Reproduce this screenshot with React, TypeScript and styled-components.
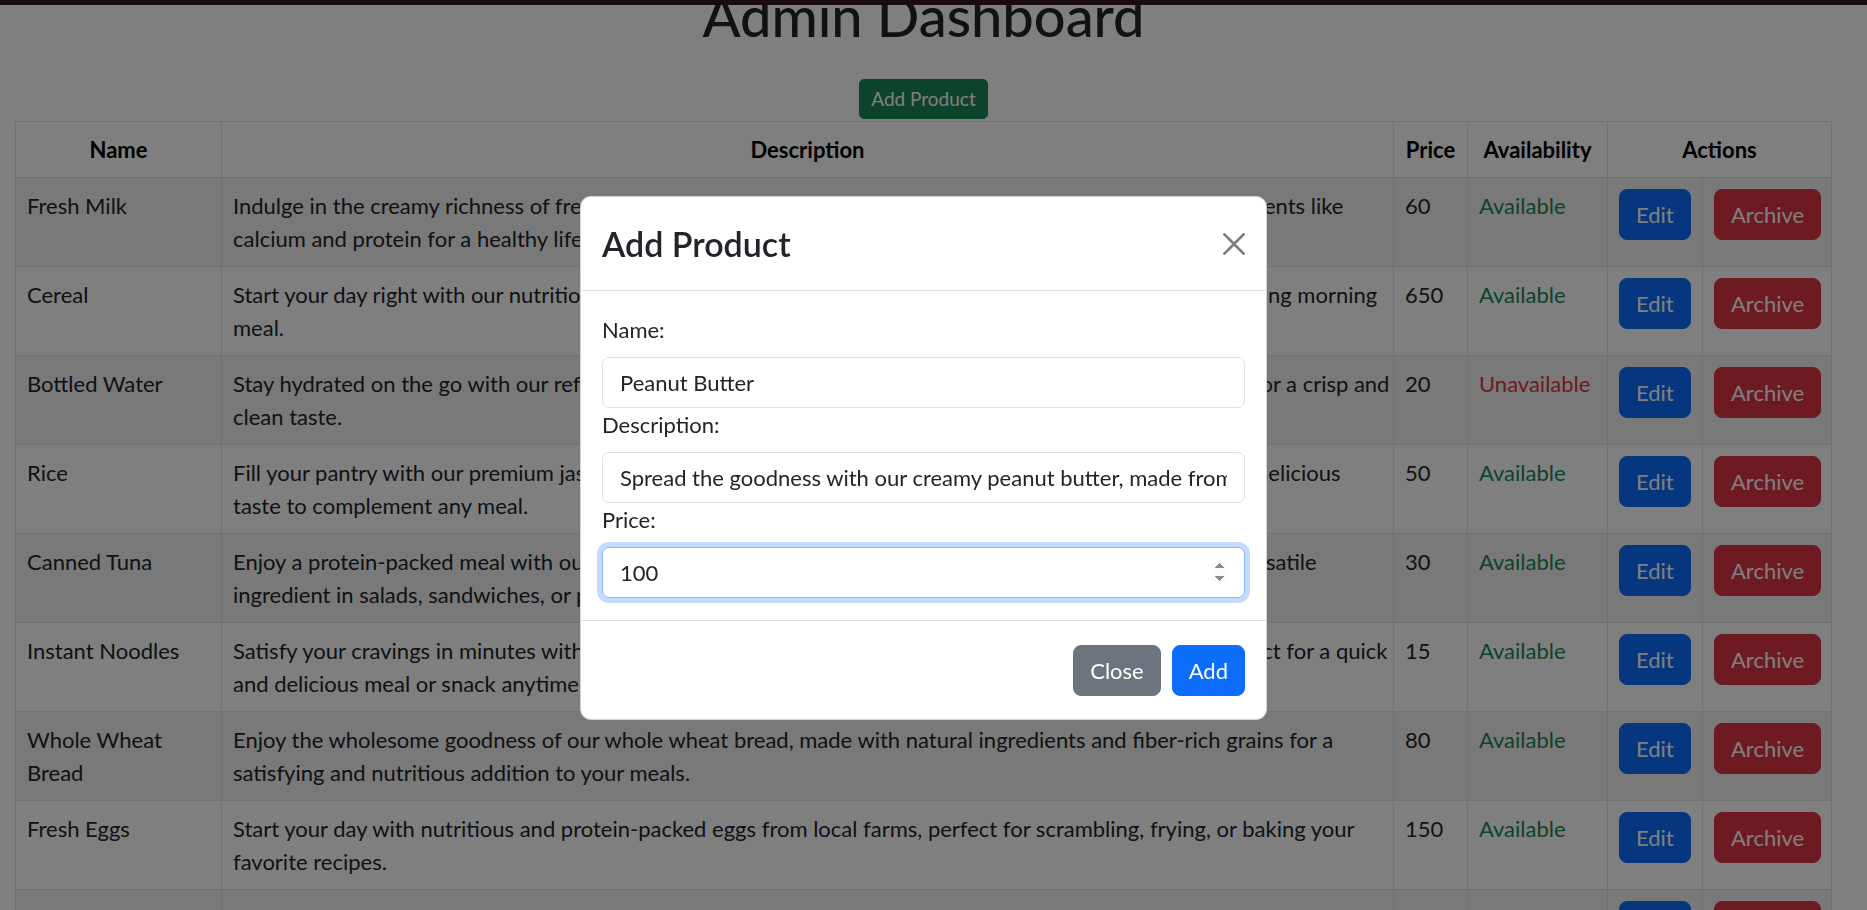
import React from 'react';
import styled, { createGlobalStyle, css } from 'styled-components';

const GlobalStyle = createGlobalStyle`
    html, body {
        margin: 0;
        padding: 0;
        background: #fff;
        overflow: hidden;
    }
    body {
        font-family: Lato, "Liberation Sans", sans-serif;
        font-size: 22px;
        line-height: 33px;
        color: #212529;
    }
    * {
        box-sizing: border-box;
    }
`;

const colors = {
    primary: '#0d6efd',
    danger: '#dc3545',
    success: '#198754',
    secondary: '#6c757d',
};

type Variant = keyof typeof colors;

const TopBar = styled.div`
    position: fixed;
    top: 0;
    left: 0;
    right: 0;
    height: 5px;
    background: #381424;
    z-index: 5;
`;

const Page = styled.main`
    padding: 0 35px 0 15px;
`;

const Title = styled.h1`
    margin: -17px 0 30px;
    font-size: 56px;
    line-height: 66px;
    font-weight: 500;
    text-align: center;
`;

const Toolbar = styled.div`
    display: flex;
    justify-content: center;
    margin-bottom: 2px;
`;

const Button = styled.button<{ $variant: Variant; $small?: boolean }>`
    font-family: inherit;
    color: #fff;
    background: ${({ $variant }) => colors[$variant]};
    border: 1px solid ${({ $variant }) => colors[$variant]};
    border-radius: 8px;
    padding: 8px 16px;
    font-size: 22px;
    line-height: 33px;
    cursor: pointer;
    white-space: nowrap;

    ${({ $small }) => $small && css`
        font-size: 19px;
        line-height: 28px;
        padding: 5px 11px;
        border-radius: 5px;
    `}
`;

const Table = styled.table`
    width: 100%;
    table-layout: fixed;
    border-collapse: collapse;
`;

const Th = styled.th`
    border: 1px solid #dee2e6;
    padding: 11px;
    font-weight: 700;
    text-align: center;
    color: #000;
`;

const Row = styled.tr<{ $striped: boolean }>`
    background: ${({ $striped }) => ($striped ? '#f2f2f2' : '#fff')};
`;

const Td = styled.td`
    border: 1px solid #dee2e6;
    padding: 11px;
    height: 89px;
    vertical-align: top;
`;

const Line = styled.span`
    display: block;
    white-space: nowrap;
`;

const Status = styled.span<{ $ok: boolean }>`
    color: ${({ $ok }) => ($ok ? colors.success : colors.danger)};
`;

const Backdrop = styled.div`
    position: fixed;
    inset: 0;
    background: rgba(0, 0, 0, 0.5);
    z-index: 10;
`;

const ModalLayer = styled.div`
    position: fixed;
    inset: 0;
    z-index: 20;
    display: flex;
    align-items: center;
    justify-content: center;
    padding: 6px 20px 0 0;
`;

const Modal = styled.div`
    width: 687px;
    background: #fff;
    border: 1px solid rgba(0, 0, 0, 0.175);
    border-radius: 11px;
    display: flex;
    flex-direction: column;
`;

const ModalHeader = styled.div`
    display: flex;
    align-items: center;
    justify-content: space-between;
    padding: 22px 21px 22px 21px;
    border-bottom: 1px solid #dee2e6;
`;

const ModalTitle = styled.h4`
    margin: 0;
    font-size: 34px;
    line-height: 49px;
    font-weight: 600;
`;

const CloseX = styled.button`
    border: 0;
    background: transparent;
    padding: 0;
    width: 22px;
    height: 22px;
    opacity: 0.5;
    cursor: pointer;
    display: flex;
`;

const ModalBody = styled.form`
    padding: 22px 21px;
    display: flex;
    flex-direction: column;
`;

const Label = styled.label`
    margin-bottom: 11px;
`;

const Input = styled.input<{ $focused?: boolean }>`
    font-family: inherit;
    font-size: 22px;
    line-height: 33px;
    color: #212529;
    padding: 8px 17px;
    height: 51px;
    border: 1px solid #dee2e6;
    border-radius: 7px;
    outline: none;
    width: 100%;

    &::-webkit-inner-spin-button {
        opacity: 1;
    }

    ${({ $focused }) => $focused && css`
        border-color: #86b7fe;
        box-shadow: 0 0 0 5px rgba(13, 110, 253, 0.25);
    `}
`;

const ModalFooter = styled.div`
    display: flex;
    justify-content: flex-end;
    gap: 11px;
    padding: 24px 21px 23px;
    border-top: 1px solid #dee2e6;
`;

type Product = {
    name: string[];
    description: string[];
    price: number;
    available: boolean;
};

const products: Product[] = [
    {
        name: ['Fresh Milk'],
        description: [
            'Indulge in the creamy richness of fresh milk, sourced from our trusted farms and packed with essential nutrients like',
            'calcium and protein for a healthy lifestyle.',
        ],
        price: 60,
        available: true,
    },
    {
        name: ['Cereal'],
        description: [
            'Start your day right with our nutritious cereals, packed with whole grains and essential vitamins for a satisfying morning',
            'meal.',
        ],
        price: 650,
        available: true,
    },
    {
        name: ['Bottled Water'],
        description: [
            'Stay hydrated on the go with our refreshing bottled water, sourced from mountaintop springs and purified for a crisp and',
            'clean taste.',
        ],
        price: 20,
        available: false,
    },
    {
        name: ['Rice'],
        description: [
            'Fill your pantry with our premium jasmine rice, carefully selected for its light fluffy texture, rich aroma, and delicious',
            'taste to complement any meal.',
        ],
        price: 50,
        available: true,
    },
    {
        name: ['Canned Tuna'],
        description: [
            'Enjoy a protein-packed meal with our premium canned tuna, rich in omega-3 fatty acids and perfect as a versatile',
            'ingredient in salads, sandwiches, or pasta dishes.',
        ],
        price: 30,
        available: true,
    },
    {
        name: ['Instant Noodles'],
        description: [
            'Satisfy your cravings in minutes with our flavorful instant noodles, super simple to prepare and simply perfect for a quick',
            'and delicious meal or snack anytime, anywhere.',
        ],
        price: 15,
        available: true,
    },
    {
        name: ['Whole Wheat', 'Bread'],
        description: [
            'Enjoy the wholesome goodness of our whole wheat bread, made with natural ingredients and fiber-rich grains for a',
            'satisfying and nutritious addition to your meals.',
        ],
        price: 80,
        available: true,
    },
    {
        name: ['Fresh Eggs'],
        description: [
            'Start your day with nutritious and protein-packed eggs from local farms, perfect for scrambling, frying, or baking your',
            'favorite recipes.',
        ],
        price: 150,
        available: true,
    },
    {
        name: ['Cooking Oil'],
        description: [
            'Cook with confidence using our pure vegetable oil, light in flavor and ideal for frying, sauteing, and baking',
            'all of your favorite dishes.',
        ],
        price: 120,
        available: true,
    },
];

const CloseIcon = () => (
    <svg width="22" height="22" viewBox="0 0 16 16" fill="#000">
        <path d="M.293.293a1 1 0 0 1 1.414 0L8 6.586 14.293.293a1 1 0 1 1 1.414 1.414L9.414 8l6.293 6.293a1 1 0 0 1-1.414 1.414L8 9.414l-6.293 6.293a1 1 0 0 1-1.414-1.414L6.586 8 .293 1.707a1 1 0 0 1 0-1.414z" />
    </svg>
);

const ProductTable = () => (
    <Table>
        <colgroup>
            <col style={{ width: 206 }} />
            <col />
            <col style={{ width: 74 }} />
            <col style={{ width: 140 }} />
            <col style={{ width: 95 }} />
            <col style={{ width: 129 }} />
        </colgroup>
        <thead>
            <tr>
                <Th>Name</Th>
                <Th>Description</Th>
                <Th>Price</Th>
                <Th>Availability</Th>
                <Th colSpan={2}>Actions</Th>
            </tr>
        </thead>
        <tbody>
            {products.map((p, i) => (
                <Row key={p.name.join(' ')} $striped={i % 2 === 0}>
                    <Td>{p.name.map((l) => <Line key={l}>{l}</Line>)}</Td>
                    <Td>{p.description.map((l) => <Line key={l}>{l}</Line>)}</Td>
                    <Td>{p.price}</Td>
                    <Td>
                        <Status $ok={p.available}>{p.available ? 'Available' : 'Unavailable'}</Status>
                    </Td>
                    <Td>
                        <Button $variant="primary">Edit</Button>
                    </Td>
                    <Td>
                        <Button $variant="danger">Archive</Button>
                    </Td>
                </Row>
            ))}
        </tbody>
    </Table>
);

const AddProductModal = () => (
    <ModalLayer>
        <Modal role="dialog">
            <ModalHeader>
                <ModalTitle>Add Product</ModalTitle>
                <CloseX type="button" aria-label="Close">
                    <CloseIcon />
                </CloseX>
            </ModalHeader>
            <ModalBody onSubmit={(e) => e.preventDefault()}>
                <Label htmlFor="name">Name:</Label>
                <Input id="name" type="text" defaultValue="Peanut Butter" />
                <Label htmlFor="description">Description:</Label>
                <Input
                    id="description"
                    type="text"
                    defaultValue="Spread the goodness with our creamy peanut butter, made from roasted peanuts for a rich and smooth taste."
                />
                <Label htmlFor="price">Price:</Label>
                <Input id="price" type="number" defaultValue={100} $focused autoFocus />
            </ModalBody>
            <ModalFooter>
                <Button $variant="secondary">Close</Button>
                <Button $variant="primary">Add</Button>
            </ModalFooter>
        </Modal>
    </ModalLayer>
);

export default function App() {
    return (
        <>
            <GlobalStyle />
            <TopBar />
            <Page>
                <Title>Admin Dashboard</Title>
                <Toolbar>
                    <Button $variant="success" $small>Add Product</Button>
                </Toolbar>
                <ProductTable />
            </Page>
            <Backdrop />
            <AddProductModal />
        </>
    );
}
